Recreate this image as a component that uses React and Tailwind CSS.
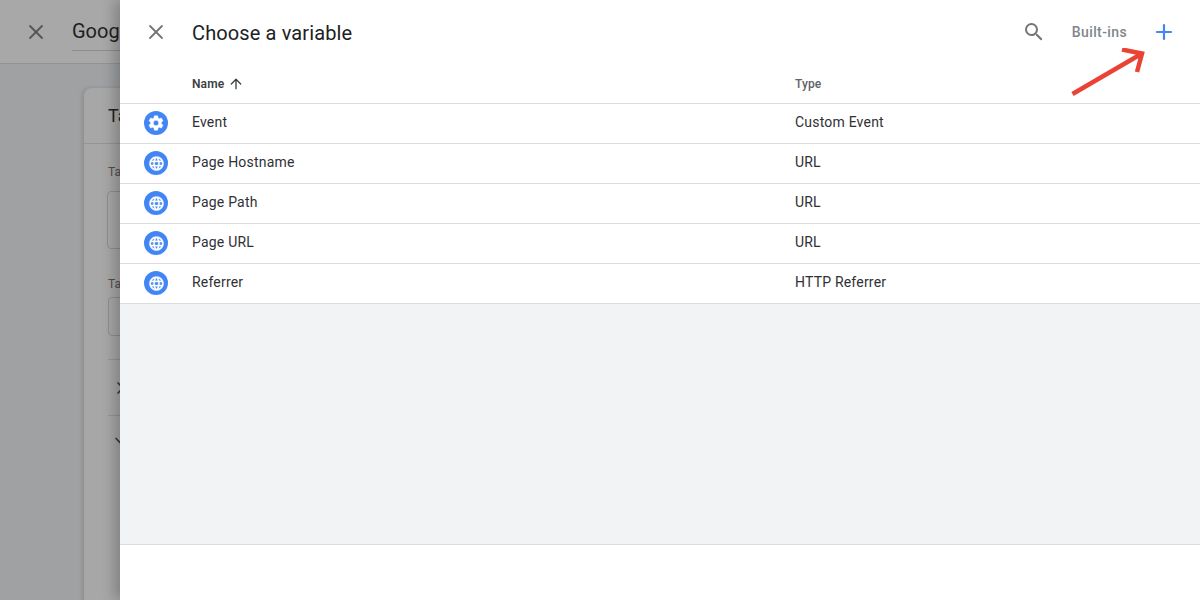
import { Plus, X, ArrowUp, ChevronDown } from "lucide-react";

const rows = [
  { name: "Event", type: "Custom Event", icon: "gear" },
  { name: "Page Hostname", type: "URL", icon: "globe" },
  { name: "Page Path", type: "URL", icon: "globe" },
  { name: "Page URL", type: "URL", icon: "globe" },
  { name: "Referrer", type: "HTTP Referrer", icon: "globe" },
];

const GearIcon = () => (
  <svg viewBox="0 0 24 24" className="w-[18px] h-[18px]" fill="#fff" stroke="#fff" strokeWidth="0.6">
    <path d="M19.14 12.94c.04-.3.06-.61.06-.94 0-.32-.02-.64-.07-.94l2.03-1.58a.49.49 0 0 0 .12-.61l-1.92-3.32a.49.49 0 0 0-.59-.22l-2.39.96c-.5-.38-1.03-.7-1.62-.94l-.36-2.54a.48.48 0 0 0-.48-.41h-3.84a.48.48 0 0 0-.47.41l-.36 2.54c-.59.24-1.13.57-1.62.94l-2.39-.96a.48.48 0 0 0-.59.22L2.74 8.87a.47.47 0 0 0 .12.61l2.03 1.58c-.05.3-.09.63-.09.94s.02.64.07.94l-2.03 1.58a.49.49 0 0 0-.12.61l1.92 3.32c.12.22.37.29.59.22l2.39-.96c.5.38 1.03.7 1.62.94l.36 2.54c.05.24.24.41.48.41h3.84c.24 0 .44-.17.47-.41l.36-2.54c.59-.24 1.13-.56 1.62-.94l2.39.96c.22.08.47 0 .59-.22l1.92-3.32a.47.47 0 0 0-.12-.61l-2.01-1.58zM12 15.6A3.6 3.6 0 1 1 12 8.4a3.6 3.6 0 0 1 0 7.2z" />
  </svg>
);

const GlobeIcon = () => (
  <svg viewBox="0 0 24 24" className="w-[17px] h-[17px]" fill="#fff" stroke="#fff" strokeWidth="0.5">
    <path d="M11.99 2C6.47 2 2 6.48 2 12s4.47 10 9.99 10C17.52 22 22 17.52 22 12S17.52 2 11.99 2zm6.93 6h-2.95a15.65 15.65 0 0 0-1.38-3.56A8.03 8.03 0 0 1 18.92 8zM12 4.04c.83 1.2 1.48 2.53 1.91 3.96h-3.82c.43-1.43 1.08-2.76 1.91-3.96zM4.26 14C4.1 13.36 4 12.69 4 12s.1-1.36.26-2h3.38c-.08.66-.14 1.32-.14 2s.06 1.34.14 2H4.26zm.82 2h2.95c.32 1.25.78 2.45 1.38 3.56A7.99 7.99 0 0 1 5.08 16zm2.95-8H5.08a7.99 7.99 0 0 1 4.33-3.56A15.65 15.65 0 0 0 8.03 8zM12 19.96c-.83-1.2-1.48-2.53-1.91-3.96h3.82c-.43 1.43-1.08 2.76-1.91 3.96zM14.34 14H9.66c-.09-.66-.16-1.32-.16-2s.07-1.35.16-2h4.68c.09.65.16 1.32.16 2s-.07 1.34-.16 2zm.25 5.56c.6-1.11 1.06-2.31 1.38-3.56h2.95a8.03 8.03 0 0 1-4.33 3.56zM16.36 14c.08-.66.14-1.32.14-2s-.06-1.34-.14-2h3.38c.16.64.26 1.31.26 2s-.1 1.36-.26 2h-3.38z" />
  </svg>
);

const SearchIcon = () => (
  <svg viewBox="0 0 24 24" className="w-6 h-6" fill="#757575">
    <path d="M15.5 14h-.79l-.28-.27A6.47 6.47 0 0 0 16 9.5 6.5 6.5 0 1 0 9.5 16c1.61 0 3.09-.59 4.23-1.57l.27.28v.79l5 4.99L20.49 19l-4.99-5zm-6 0C7.01 14 5 11.99 5 9.5S7.01 5 9.5 5 14 7.01 14 9.5 11.99 14 9.5 14z" />
  </svg>
);

const Row = ({ name, type, icon }) => (
  <div className="flex items-center h-10 pb-px border-b border-[#dadce0] text-[14px] tracking-[0.2px] text-[#303134]">
    <div className="w-[72px] pl-6 shrink-0">
      <div className="w-6 h-6 rounded-full bg-[#4285f4] flex items-center justify-center">
        {icon === "gear" ? <GearIcon /> : <GlobeIcon />}
      </div>
    </div>
    <div className="w-[603px] shrink-0 mb-px">{name}</div>
    <div className="mb-px">{type}</div>
  </div>
);

const App = () => {
  return (
    <div className="flex w-[1200px] h-[600px] overflow-hidden bg-white font-['Roboto',sans-serif]">
      {/* greyed out page behind the panel */}
      <div className="w-[120px] shrink-0 overflow-hidden bg-[#a0a1a3]">
        <div className="w-[400px] h-[64px] flex items-center bg-[#a8a8a8] border-b border-[#939393] pl-6">
          <X size={24} strokeWidth={1.8} className="text-[#555555] shrink-0" />
          <div className="ml-6 border-b border-[#8c8c8c] text-[20px] leading-[37px] text-[#1f1f1f] pt-px">
            Google Tag
          </div>
        </div>
        <div className="w-[400px] ml-[84px] mt-[24px] h-[600px] bg-[#a7a7a7] rounded-t-lg shadow-[-2px_0_4px_rgba(0,0,0,0.12)]">
          <div className="h-[56px] flex items-center pl-6 border-b border-[#949494] text-[18px] text-[#1f1f1f]">
            Tag Configuration
          </div>
          <div className="pl-6 pt-[20px] text-[12px] leading-[16px] text-[#4f4f4f]">Tag type</div>
          <div className="ml-[23px] mt-[11px] h-[58px] rounded border border-[#8e8e8e]" />
          <div className="pl-6 mt-[27px] text-[12px] leading-[16px] text-[#4f4f4f]">Tag ID</div>
          <div className="ml-6 mt-[5px] h-[39px] rounded border border-[#8e8e8e]" />
          <div className="ml-6 mt-[23px] h-[57px] border-y border-[#949494] flex items-center pl-[5px]">
            <X size={20} className="text-[#3c3c3c]" />
          </div>
          <div className="ml-6 pt-[15px] pl-[3px]">
            <ChevronDown size={20} className="text-[#3c3c3c]" />
          </div>
        </div>
      </div>

      {/* variable chooser */}
      <div className="relative flex-1 flex flex-col bg-white shadow-[-6px_0_12px_rgba(0,0,0,0.22)]">
        <div className="h-[64px] flex items-center pl-6 shrink-0">
          <X size={24} strokeWidth={1.8} className="text-[#757575] shrink-0" />
          <h1 className="ml-6 mt-px text-[20px] tracking-[0.12px] text-[#202124]">Choose a variable</h1>
          <div className="ml-auto">
            <SearchIcon />
          </div>
          <span className="ml-[26px] text-[14px] font-medium tracking-[0.38px] text-[#80868b]">Built-ins</span>
          <Plus size={24} strokeWidth={2.2} className="ml-[25px] mr-6 text-[#4285f4]" />
        </div>
        <div className="h-10 flex items-center border-b border-[#dadce0] text-[12px] font-medium tracking-[0.1px] shrink-0">
          <div className="w-[603px] ml-[72px] flex items-center text-[#3c4043] font-semibold shrink-0">
            Name
            <ArrowUp size={16} strokeWidth={2} className="ml-[4px] text-[#3c4043]" />
          </div>
          <div className="text-[#5f6368]">Type</div>
        </div>
        {rows.map((r) => (
          <Row key={r.name} {...r} />
        ))}
        <div className="h-[241px] bg-[#f1f3f4] border-b border-[#dadce0] shrink-0" />
        <div className="flex-1 bg-white" />

        {/* red annotation arrow */}
        <svg className="absolute left-[950px] top-[48px] w-[76px] h-[50px]" viewBox="0 0 76 50" fill="none">
          <path d="M2.5 46 L72 5.5 M52 1.5 L72 5.5 L67 24" stroke="#ea4335" strokeWidth="4.5" />
        </svg>
      </div>
    </div>
  );
};

export default App;
